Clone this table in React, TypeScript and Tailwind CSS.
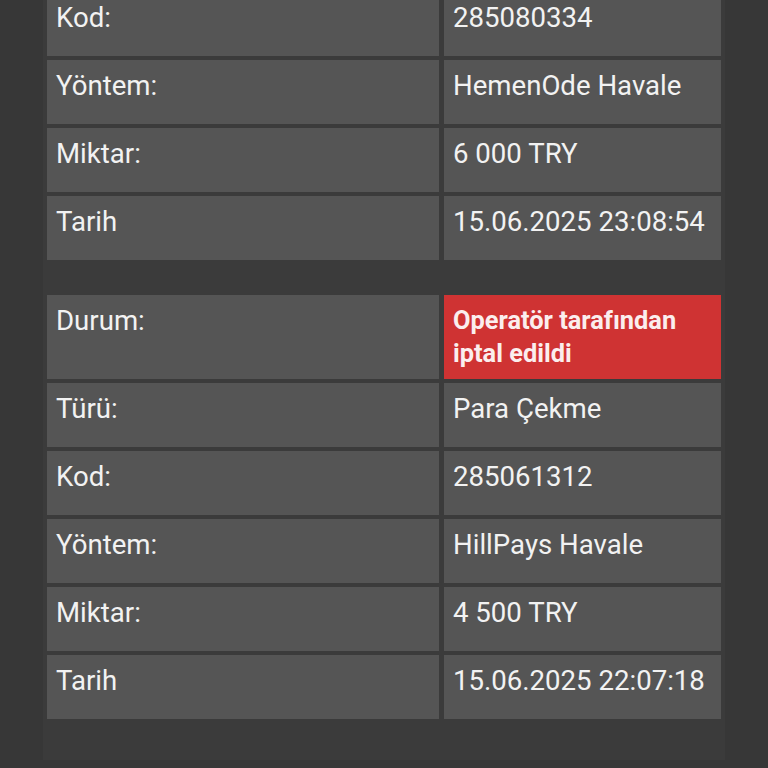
type Row = { label: string; value: string; status?: boolean };

const first: Row[] = [
  { label: "Kod:", value: "285080334" },
  { label: "Yöntem:", value: "HemenOde Havale" },
  { label: "Miktar:", value: "6 000 TRY" },
  { label: "Tarih", value: "15.06.2025 23:08:54" },
];

const second: Row[] = [
  { label: "Durum:", value: "Operatör tarafından iptal edildi", status: true },
  { label: "Türü:", value: "Para Çekme" },
  { label: "Kod:", value: "285061312" },
  { label: "Yöntem:", value: "HillPays Havale" },
  { label: "Miktar:", value: "4 500 TRY" },
  { label: "Tarih", value: "15.06.2025 22:07:18" },
];

function Table({ rows }: { rows: Row[] }) {
  return (
    <div className="grid grid-cols-[392px_277px] gap-x-[5px] gap-y-[4px]">
      {rows.map((r, i) => (
        <div key={i} className="contents">
          <div className="bg-[#555555] min-h-[64px] pl-[9px] pr-2 pt-[9px] pb-[9px] text-[#f2f2f2]">
            {r.label}
          </div>
          {r.status ? (
            <div className="bg-[#cf3333] min-h-[64px] pl-[9px] pr-2 pt-[9px] pb-[9px] font-bold text-[25.4px] leading-[33px] text-[#fbeeee]">
              {r.value}
            </div>
          ) : (
            <div className="bg-[#555555] min-h-[64px] pl-[9px] pr-2 pt-[9px] pb-[9px] text-[#f2f2f2]">
              {r.value}
            </div>
          )}
        </div>
      ))}
    </div>
  );
}

export default function App() {
  return (
    <div className="w-[768px] h-[768px] overflow-hidden bg-[#373737] font-['Roboto',_'Noto_Sans',_sans-serif] text-[27.6px] leading-[33px]">
      <div className="mx-auto w-[682px] h-full bg-[#3b3b3b] px-[4px]">
        <div className="-mt-[8px] flex flex-col gap-[35px]">
          <Table rows={first} />
          <Table rows={second} />
        </div>
      </div>
    </div>
  );
}
